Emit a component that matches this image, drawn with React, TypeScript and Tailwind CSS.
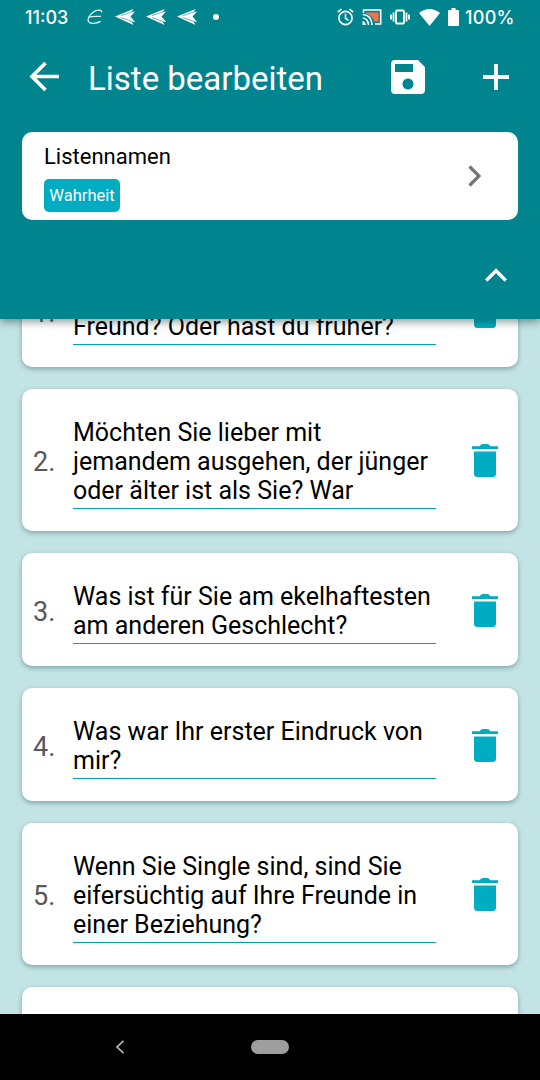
import React from 'react';

interface Question {
  id: number;
  lines: string[];
}

const questions: Question[] = [
  { id: 1, lines: ['Haben Sie einen festen', 'Freund? Oder hast du früher?'] },
  { id: 2, lines: ['Möchten Sie lieber mit', 'jemandem ausgehen, der jünger', 'oder älter ist als Sie? War'] },
  { id: 3, lines: ['Was ist für Sie am ekelhaftesten', 'am anderen Geschlecht?'] },
  { id: 4, lines: ['Was war Ihr erster Eindruck von', 'mir?'] },
  { id: 5, lines: ['Wenn Sie Single sind, sind Sie', 'eifersüchtig auf Ihre Freunde in', 'einer Beziehung?'] },
];

const PlaneIcon: React.FC = () => (
  <svg className="h-[16px] w-[20px]" viewBox="0 0 20 16" fill="#fff">
    <path d="M0 7.500 18.500 0 16.500 3 20 2.500 15.500 7.500 20 13 16.500 12.500 18.500 16Z" />
    <path d="M6 6.600 17.500 2.800M6 8.600l11.500 4" stroke="#00848e" strokeWidth="0.600" />
  </svg>
);

const TrashIcon: React.FC = () => (
  <svg className="h-[34px] w-[26px]" viewBox="0 0 26 34" fill="#00acc1">
    <path d="M0 2.200h7.500Q9 0 11 0h4q2 0 3.500 2.200H26V5H0Z" />
    <path d="M2 7.500h22V29.500Q24 33 20.500 33h-15Q2 33 2 29.500Z" />
  </svg>
);

const StatusBar: React.FC = () => (
  <div className="flex h-[34px] items-center pl-[25px] pr-[25px] font-['Inter'] text-[18px] font-medium text-white">
    <span className="w-[45px]">11:03</span>
    <svg className="ml-[17px] h-[16px] w-[16px]" viewBox="0 0 16 16" fill="none" stroke="#d8f5f5" strokeWidth="1.400">
      <path d="M14.500 3.200C15.500.6 10 .2 6 3.200 2.500 6 .3 10 1.500 12.500c1.500 3 8 2 12-.2M1.500 8.200c4-1.200 8-.8 12.500-.8" />
    </svg>
    <div className="ml-[12px] flex gap-[11px]">
      <PlaneIcon />
      <PlaneIcon />
      <PlaneIcon />
    </div>
    <span className="ml-[16px] h-[6px] w-[6px] rounded-full bg-white" />
    <div className="ml-auto flex items-center">
      <svg className="h-[18px] w-[17px]" viewBox="0 0 17 18" fill="none" stroke="#fff" strokeWidth="1.600">
        <circle cx="8.500" cy="10" r="6.600" />
        <path d="M8.500 5.800V10.300l3 2M.8 4.200 4.500 1M16.200 4.200 12.500 1" />
      </svg>
      <svg className="ml-[8px] h-[16px] w-[20px]" viewBox="0 0 20 16" fill="none" stroke="#fff" strokeWidth="1.600">
        <path d="M4 3.500h12.500v9H12.500Q10.500 7 4 4.500Z" fill="#ff7043" stroke="none" />
        <path d="M1.500 4V1h17.200v14H13M.8 5.500Q9.500 6 10 16M.8 9Q6 9.500 6.500 16" />
        <path d="M.5 12Q3.500 12.500 4 16H.5Z" fill="#fff" stroke="none" />
      </svg>
      <svg className="ml-[8px] h-[16px] w-[20px]" viewBox="0 0 20 16" fill="none" stroke="#fff" strokeWidth="1.800">
        <rect x="6" y="1.500" width="8" height="13" rx="1" />
        <path d="M3.500 3.500v9M1 5.500v5M16.500 3.500v9M19 5.500v5" />
      </svg>
      <svg className="ml-[9px] h-[17px] w-[21px]" viewBox="0 0 21 17" fill="#fff">
        <path d="M0 4Q10.500-4 21 4L10.500 17Z" />
      </svg>
      <svg className="ml-[8px] h-[18px] w-[11px]" viewBox="0 0 11 18" fill="#fff">
        <path d="M3.500 0h4v2H10q1 0 1 1v14q0 1-1 1H1q-1 0-1-1V3q0-1 1-1h2.500Z" />
      </svg>
      <span className="ml-[6px] w-[50px] whitespace-nowrap tracking-[0.300px]">100%</span>
    </div>
  </div>
);

const QuestionCard: React.FC<{ question: Question }> = ({ question }) => (
  <div className="flex shrink-0 items-center rounded-[10px] bg-white shadow-[0_2px_5px_rgba(0,50,55,0.35)]">
    <span className="w-[51px] pl-[11px] pt-[4px] text-[27px] leading-[32px] text-[#58585a]">{question.id}.</span>
    <div className="w-[363px] pb-[22px] pt-[29px] text-[25px] leading-[29px] text-black">
      <div className="border-b border-[#00a3ad] pb-[3px]">
        {question.lines.map((line) => (
          <p key={line} className="whitespace-nowrap">{line}</p>
        ))}
      </div>
    </div>
    <div className="ml-[36px] pt-[2px]">
      <TrashIcon />
    </div>
  </div>
);

const App: React.FC = () => {
  return (
    <div className="flex h-[1080px] w-[540px] flex-col overflow-hidden bg-[#c3e4e5] font-['Roboto',sans-serif]">
      {/* Header */}
      <header className="relative z-10 flex h-[319px] shrink-0 flex-col bg-[#00848e] shadow-[0_3px_8px_rgba(0,40,45,0.45)]">
        <StatusBar />
        <div className="flex h-[86px] items-center pl-[29px] pr-[31px] text-white">
          <svg className="h-[30px] w-[30px]" viewBox="0 0 30 30" fill="none" stroke="#fff" strokeWidth="3.600">
            <path d="M30 14.500H3M16.500 1 3 14.500 16.500 28" />
          </svg>
          <h1 className="ml-[29px] whitespace-nowrap pt-[3px] text-[33px] leading-[40px]">Liste bearbeiten</h1>
          <svg className="ml-auto h-[34px] w-[34px]" viewBox="0 0 34 34" fill="#fff" fillRule="evenodd">
            <path d="M4 0h23l7 7v23q0 4-4 4H4q-4 0-4-4V4Q0 0 4 0ZM4 4v8h18V4ZM17 18.500a5.500 5.500 0 1 0 .01 0Z" />
          </svg>
          <svg className="ml-[58px] h-[26px] w-[26px]" viewBox="0 0 26 26" stroke="#fff" strokeWidth="3.800">
            <path d="M13 0v26M0 13h26" />
          </svg>
        </div>

        {/* List name */}
        <div className="mx-[22px] mt-[12px] flex h-[88px] items-center justify-between rounded-[10px] bg-white pl-[22px] pr-[37px]">
          <div className="flex flex-col items-start pt-[3px]">
            <span className="text-[22px] leading-[26px] text-black">Listennamen</span>
            <span className="mt-[9px] flex h-[33px] w-[76px] items-center justify-center rounded-[5px] bg-[#00acc1] pt-[2px] text-[16.500px] text-white">
              Wahrheit
            </span>
          </div>
          <svg className="h-[22px] w-[13px]" viewBox="0 0 13 22" fill="none" stroke="#757575" strokeWidth="3.200">
            <path d="M1.500 1.500 11 11 1.500 20.500" />
          </svg>
        </div>

        <div className="flex flex-1 items-center justify-end pr-[33px] pt-[11px]">
          <svg className="h-[14px] w-[22px]" viewBox="0 0 22 14" fill="none" stroke="#fff" strokeWidth="3.400">
            <path d="M1.200 12.500 11 2.700l9.800 9.800" />
          </svg>
        </div>
      </header>

      {/* Questions */}
      <main className="flex flex-1 flex-col overflow-hidden px-[22px]">
        <div className="mt-[-65px] flex flex-col gap-[22px]">
          {questions.map((question) => (
            <QuestionCard key={question.id} question={question} />
          ))}
          <div className="h-[113px] rounded-[10px] bg-white shadow-[0_2px_5px_rgba(0,50,55,0.35)]" />
        </div>
      </main>

      {/* Navigation bar */}
      <nav className="relative z-10 flex h-[66px] shrink-0 items-center bg-black">
        <svg className="ml-[115px] h-[14px] w-[10px]" viewBox="0 0 10 14" fill="none" stroke="#aaa" strokeWidth="1.800">
          <path d="M8.500.800 2 7l6.500 6.200" />
        </svg>
        <span className="ml-[126px] h-[14px] w-[38px] rounded-full bg-[#9e9e9e]" />
      </nav>
    </div>
  );
};

export default App;
